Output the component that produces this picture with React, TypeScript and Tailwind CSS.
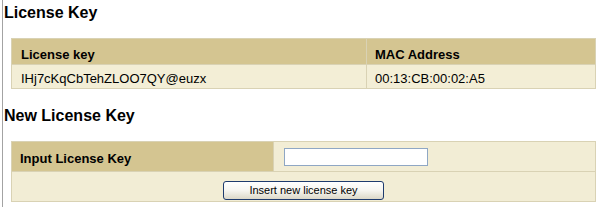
export default function App() {
  return (
    <div className="w-[600px] h-[207px] bg-white overflow-hidden font-['Liberation_Sans',Arial,sans-serif] text-black">
      <div className="ml-[2px] h-full border-l border-[#a3a3a3] pl-[1px]">
        <h1 className="pt-[4px] text-[16px] leading-[18px] font-bold">License Key</h1>

        <table className="mt-[16px] ml-[7px] w-[585px] border-collapse text-[13px] leading-[15px]">
          <tbody>
            <tr className="h-[26px] bg-[#d4c591]">
              <th className="w-[355px] border border-[#d9d2b4] px-[9px] pt-[8px] pb-[2px] text-left font-bold">License key</th>
              <th className="border border-[#d9d2b4] px-[8px] pt-[8px] pb-[2px] text-left font-bold">MAC Address</th>
            </tr>
            <tr className="h-[24px] bg-[#f3eed6]">
              <td className="border border-[#d9d2b4] px-[9px] pt-[6px] pb-[2px]">IHj7cKqCbTehZLOO7QY@euzx</td>
              <td className="border border-[#d9d2b4] px-[8px] pt-[6px] pb-[2px]">00:13:CB:00:02:A5</td>
            </tr>
          </tbody>
        </table>

        <h1 className="mt-[18px] text-[16px] leading-[18px] font-bold">New License Key</h1>

        <table className="mt-[16px] ml-[7px] w-[585px] border-collapse text-[13px] leading-[15px]">
          <tbody>
            <tr className="h-[30px]">
              <th className="w-[262px] border border-[#d9d2b4] bg-[#d4c591] px-[8px] pt-[3px] text-left font-bold">Input License Key</th>
              <td className="border border-[#d9d2b4] bg-[#f2edd5] px-[10px]">
                <input
                  type="text"
                  className="block h-[18px] w-[144px] border border-[#8fa7c4] bg-white px-1 text-[12px] outline-none"
                />
              </td>
            </tr>
            <tr className="h-[30px] bg-[#f2edd5]">
              <td colSpan={2} className="border border-[#d9d2b4] pt-[8px] pb-[1px] text-center">
                <button
                  type="button"
                  className="inline-block h-[19px] w-[161px] rounded-[3px] border border-[#1e3b6e] bg-gradient-to-b from-white via-[#f6f5f0] to-[#dcd8c8] text-[11px] leading-[15px] text-black"
                >
                  Insert new license key
                </button>
              </td>
            </tr>
          </tbody>
        </table>
      </div>
    </div>
  );
}
